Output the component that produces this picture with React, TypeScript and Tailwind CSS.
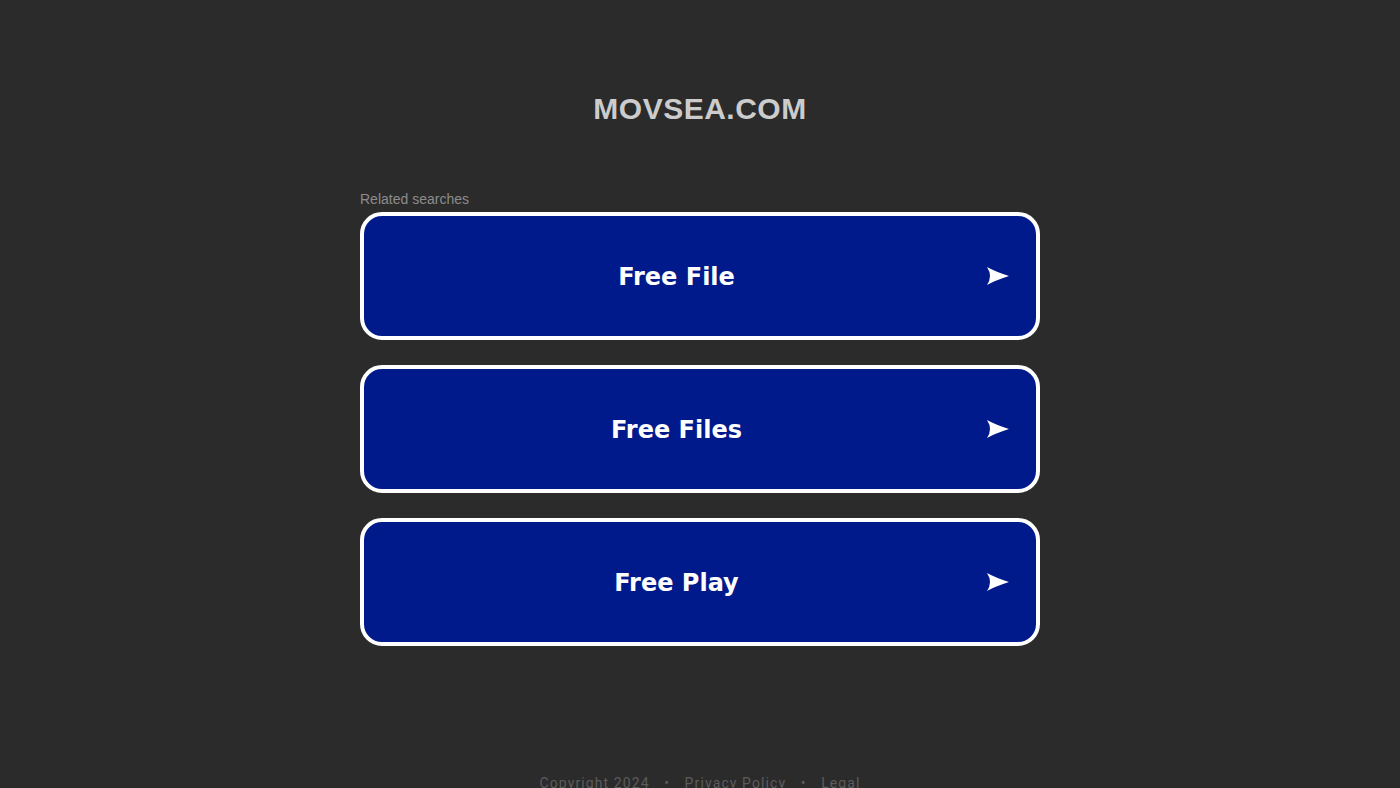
const links = ["Free File", "Free Files", "Free Play"];

function Arrow() {
  return (
    <svg width="22" height="18" viewBox="0 0 22 18" className="block">
      <path d="M0 0 Q8 4.5 22 9 Q8 13.5 0 18 Q6 9 0 0 Z" fill="#ffffff" />
    </svg>
  );
}

export default function App() {
  return (
    <div className="min-h-[788px] w-full overflow-hidden bg-[#2b2b2b]">
      <div className="pt-[91px] text-center font-['Liberation_Sans',Arial,sans-serif] text-[30px] font-bold leading-[36px] tracking-[0.5px] text-[#cccccc]">
        MOVSEA.COM
      </div>

      <div className="mx-auto mt-[64px] w-[680px]">
        <div className="font-['Liberation_Sans',Arial,sans-serif] text-[14px] leading-[16px] text-[#8c8c8c]">
          Related searches
        </div>
        <div className="mt-[5px] flex flex-col gap-[25px]">
          {links.map((l) => (
            <a
              key={l}
              href="#"
              className="flex h-[128px] items-center rounded-[22px] border-4 border-white bg-[#011a8b]"
            >
              <span className="flex-1 pt-[2px] pl-[2px] text-center font-['DejaVu_Sans',Verdana,sans-serif] text-[24px] font-bold text-white">
                {l}
              </span>
              <span className="pr-[27px]">
                <Arrow />
              </span>
            </a>
          ))}
        </div>
      </div>

      <div className="mt-[129px] text-center font-['Roboto',Arial,sans-serif] text-[14px] leading-[16px] tracking-[1.1px] text-[#5c5c5c]">
        Copyright 2024 <span className="mx-[10px]">•</span> Privacy Policy{" "}
        <span className="mx-[10px]">•</span> Legal
      </div>
    </div>
  );
}
